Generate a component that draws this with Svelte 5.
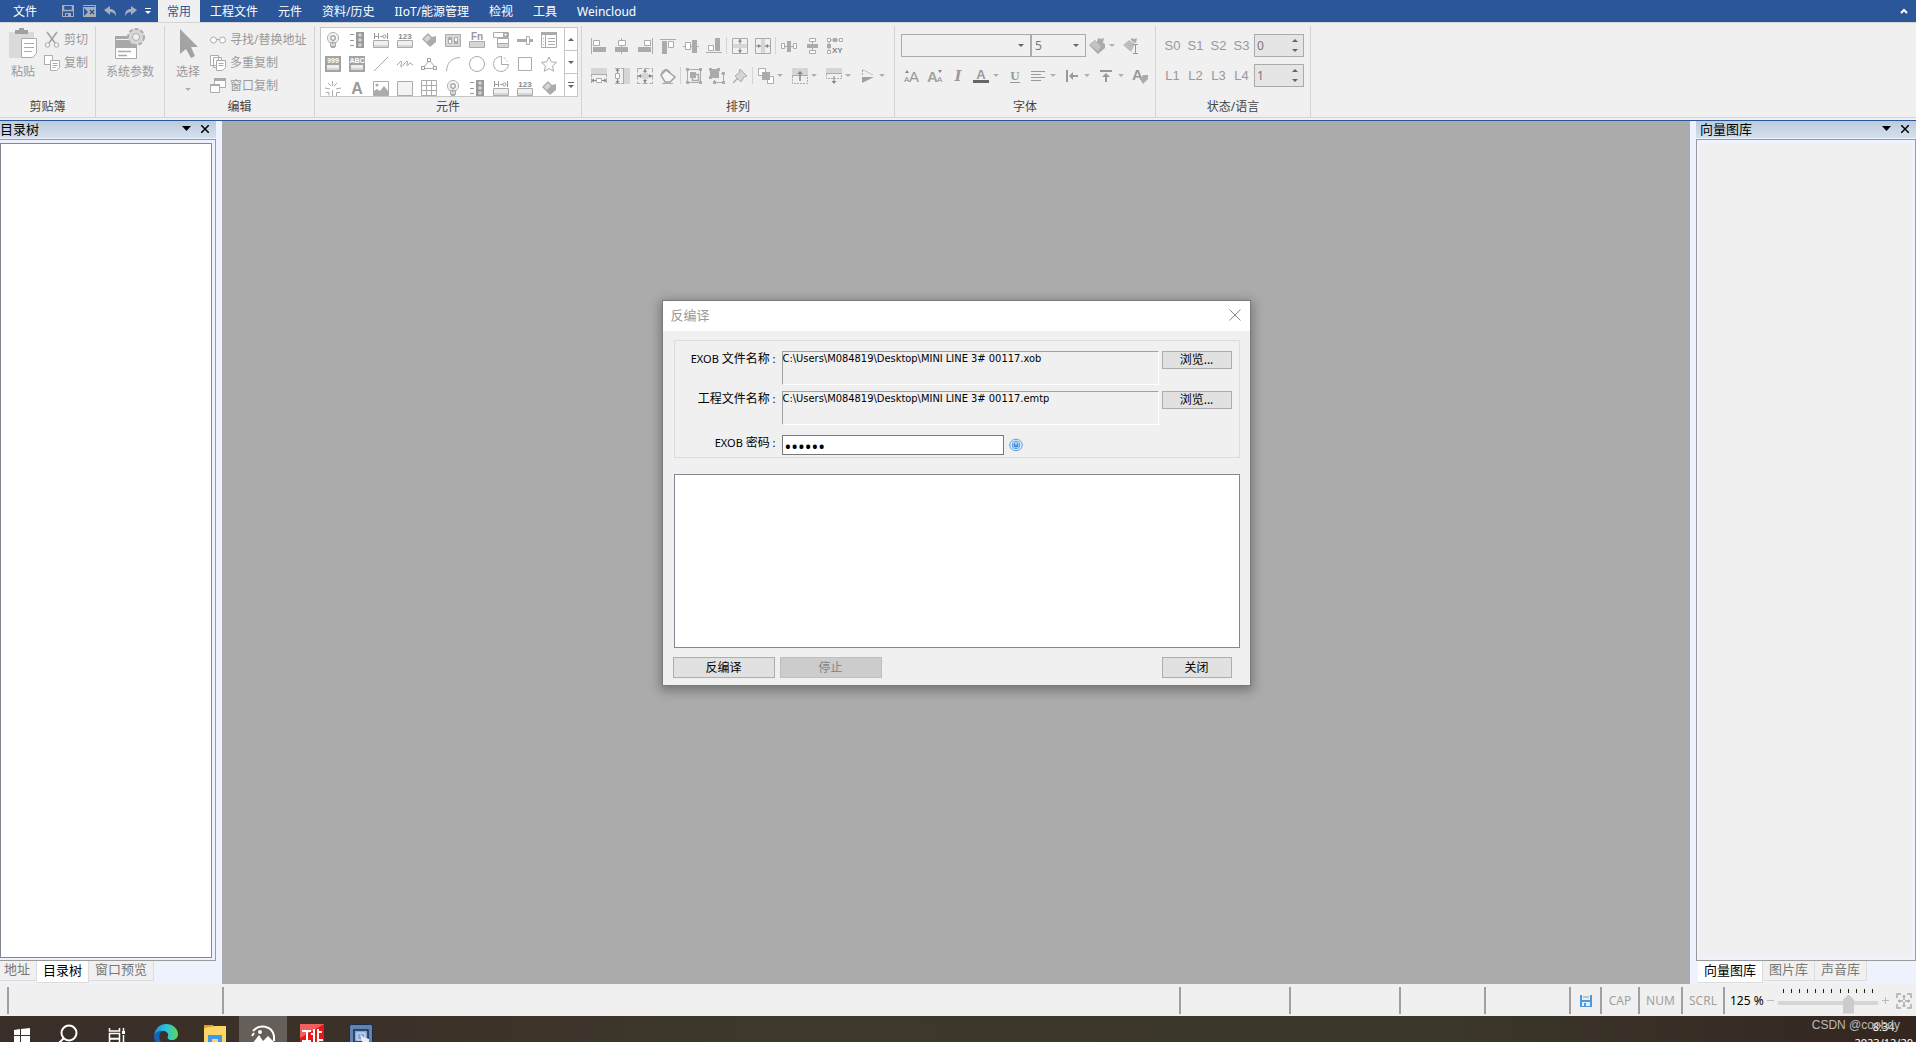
<script lang="ts">
  const G = '#ababab';
  const L = '#d6d6d6';

  // 16x16 icon bodies, drawn in the disabled greys of the ribbon
  const icons: Record<string, string> = {
    bulb: `<circle cx="8" cy="6" r="5.500" fill="#f6f6f6" stroke="${G}"/><circle cx="8" cy="6" r="2.300" fill="none" stroke="${G}" stroke-width="1.500"/><path d="M5.500 10.500h5v4h-5z" fill="${L}" stroke="${G}"/><path d="M8 8v4M6 15.500h4" stroke="${G}"/>`,
    traffic: `<path d="M1 2.500h4M1 8.500h4M1 13.500h4" stroke="#999"/><path d="M7 0h8v16H7z" fill="#999"/><circle cx="11" cy="3" r="1.800" fill="${L}"/><circle cx="11" cy="8" r="1.800" fill="${L}"/><circle cx="11" cy="13" r="1.800" fill="${L}"/>`,
    toggle: `<path d="M1.500 1v6M1.500 4.500h4M5.500 1v6M7 4.500h3M14.500 1v6" fill="none" stroke="#999"/><circle cx="11.500" cy="4.500" r="1.500" fill="none" stroke="#999"/><path d="M.5 8.500h15v7H.5z" fill="#f0f0f0" stroke="${G}"/><path d="M1 13h14v2H1z" fill="${L}"/>`,
    num: `<text x="8" y="7" text-anchor="middle" font-family="Liberation Sans" font-weight="bold" font-size="8" fill="#888">123</text><path d="M.5 8.500h15v7H.5z" fill="#f0f0f0" stroke="${G}"/><path d="M1 13h14v2H1z" fill="${L}"/>`,
    knob: `<path d="M1 7l6-6 4 4 4-1v6l-6 5z" fill="${G}"/><path d="M3 7l4-4 3 3-4 4z" fill="${L}"/>`,
    switches: `<path d="M.5 2.500h15v12H.5z" fill="${L}" stroke="${G}"/><path d="M3.500 5.500h3v6h-3zM9.500 5.500h3v6h-3z" fill="#fff" stroke="${G}"/><path d="M4 6h2v2H4zM10 9h2v2h-2z" fill="${G}"/>`,
    fn: `<text x="8" y="8" text-anchor="middle" font-family="Liberation Sans" font-weight="bold" font-size="10" fill="#999">Fn</text><path d="M.5 9.500h15v6H.5z" fill="${L}" stroke="${G}"/>`,
    combo: `<path d="M.5.5h15v5H.5zM4.500 6.500h11v9h-11zM4.500 11.500h11" fill="#fff" stroke="${G}"/><path d="M10 1h5v4h-5z" fill="${G}"/><path d="M11 2h3l-1.500 2z" fill="#fff"/><path d="M5 12h10v3H5z" fill="${L}"/>`,
    slider: `<path d="M0 7h9v3H0zM13 7h3v3h-3z" fill="${G}"/><path d="M9.500 4.500h3v8h-3z" fill="#fff" stroke="${G}"/>`,
    list: `<path d="M.5.5h15v15H.5z" fill="#fff" stroke="${G}"/><path d="M0 0h16v3H0z" fill="${G}"/><path d="M4.500 3v12M7 6.500h7M7 9.500h7M7 12.500h7M2 6.500h1M2 9.500h1M2 12.500h1" stroke="${G}"/>`,
    n999: `<path d="M0 0h16v16H0z" fill="#a3a3a3"/><text x="8" y="7" text-anchor="middle" font-family="Liberation Sans" font-weight="bold" font-size="7" fill="#fff">999</text><path d="M2 9h12v5H2z" fill="#eee"/><path d="M2 12h12v2H2z" fill="${L}"/>`,
    abc: `<path d="M0 0h16v16H0z" fill="#a3a3a3"/><text x="8" y="7" text-anchor="middle" font-family="Liberation Sans" font-weight="bold" font-size="7" fill="#fff">ABC</text><path d="M2 9h12v5H2z" fill="#eee"/><path d="M2 12h12v2H2z" fill="${L}"/>`,
    line: `<path d="M1 15L15 1" stroke="${G}"/>`,
    squiggle: `<path d="M0 9l3-3c2-2 2 0 1 3s1 2 3-1l2-2c2-2 2 0 1 2s1 2 2 0l1-1c1-1 1 2 3 2" fill="none" stroke="#a0a0a0"/>`,
    poly: `<path d="M3 11l4-5M9.500 5.500l4 5M3 12.500h9" stroke="${G}"/><path d="M6.500 2.500h3v3h-3zM.5 10.500h3v3h-3zM12.500 10.500h3v3h-3z" fill="#fff" stroke="#999"/>`,
    arc: `<path d="M1.500 15C2 7 6 2 15 1.500" fill="none" stroke="${G}"/>`,
    circle: `<circle cx="8" cy="8" r="7.500" fill="none" stroke="${G}"/>`,
    pie: `<path d="M8.500.5A7.500 7.500 0 1 0 15.500 8.500h-7z" fill="none" stroke="${G}"/><path d="M11 1.500l3.500 4" stroke="${G}" stroke-dasharray="2"/>`,
    rect: `<path d="M1.500 1.500h13v13h-13z" fill="none" stroke="${G}"/>`,
    star: `<path d="M8 1l2.200 4.800 5.300.6-4 3.500 1.200 5.300L8 12.500l-4.700 2.700 1.200-5.300-4-3.500 5.300-.6z" fill="none" stroke="${G}"/>`,
    burst: `<path d="M7.500 1v5M3 3l3 3M12 3l-3 3M0 8l5 1M16 8l-5 1M1 12.500h3v3M7.500 10v6M11.500 16v-3.500H15" fill="none" stroke="${G}"/>`,
    bigA: `<text x="8" y="14" text-anchor="middle" font-family="Liberation Sans" font-weight="bold" font-size="16" fill="#999">A</text>`,
    picture: `<path d="M.5 1.500h15v14H.5z" fill="#fff" stroke="${G}"/><circle cx="4" cy="5" r="1.500" fill="${G}"/><path d="M1 15v-4l3-2 3 2 4-5 4 5v4z" fill="${G}"/>`,
    frame: `<path d="M.5 1.500h15v14H.5z" fill="#f3f3f3" stroke="${G}"/>`,
    grid: `<path d="M.5.5h15v15H.5zM.5 5.500h15M.5 10.500h15M5.500.5v15M10.500.5v15" fill="none" stroke="${G}"/>`,

    alLeft: `<path d="M.5 0v16" stroke="${G}"/><path d="M2.500 2.500h6v5h-6z" fill="#fff" stroke="${G}"/><path d="M2 9h13v5H2z" fill="${G}"/>`,
    alCenter: `<path d="M7.500 0v16" stroke="${G}"/><path d="M4.500 2.500h7v5h-7z" fill="#fff" stroke="${G}"/><path d="M1 9h13v5H1z" fill="${G}"/>`,
    alRight: `<path d="M15.500 0v16" stroke="${G}"/><path d="M7.500 2.500h6v5h-6z" fill="#fff" stroke="${G}"/><path d="M1 9h13v5H1z" fill="${G}"/>`,
    alTop: `<path d="M0 1.500h16" stroke="${G}"/><path d="M2 3h5v13H2z" fill="${G}"/><path d="M8.500 3.500h5v6h-5z" fill="#fff" stroke="${G}"/>`,
    alMid: `<path d="M0 8.500h16" stroke="${G}"/><path d="M2.500 4.500h5v7h-5z" fill="#fff" stroke="${G}"/><path d="M9 2h5v13H9z" fill="${G}"/>`,
    alBottom: `<path d="M0 14.500h16" stroke="${G}"/><path d="M2.500 7.500h5v5h-5z" fill="#fff" stroke="${G}"/><path d="M9 0h5v13H9z" fill="${G}"/>`,
    midV: `<path d="M.5.5h15v15H.5z" fill="none" stroke="${G}"/><path d="M1 6h14v4H1z" fill="${L}"/><path d="M8 1v5M8 10v5" stroke="#888"/><path d="M6 4h4L8 1zM6 12h4l-2 3z" fill="#888"/>`,
    midH: `<path d="M.5.5h15v15H.5z" fill="none" stroke="${G}"/><path d="M6 1h4v14H6z" fill="${L}"/><path d="M1 8h5M10 8h5" stroke="#888"/><path d="M3 6v4l3-2zM13 6v4l-3-2z" fill="#888"/>`,
    spaceH: `<path d="M0 8.500h16" stroke="${G}"/><path d="M.5 5.500h3v5h-3zM12.500 5.500h3v5h-3z" fill="#fff" stroke="${G}"/><path d="M6 3h4v11H6z" fill="${G}"/>`,
    spaceV: `<path d="M8.500 0v16" stroke="${G}"/><path d="M5.500.5h6v3h-6zM5.500 12.500h6v3h-6z" fill="#fff" stroke="${G}"/><path d="M3 6h11v4H3z" fill="${G}"/>`,
    xy: `<path d="M2 2h12M2 2v12" stroke="${G}"/><path d="M.5.5h3v3h-3zM12.500.5h3v3h-3zM.5 12.500h3v3h-3z" fill="#fff" stroke="${G}"/><path d="M6 0h4v4H6zM0 6h4v4H0z" fill="${G}"/><text x="5" y="15" font-family="Liberation Sans" font-weight="bold" font-size="8" fill="#888">XY</text>`,
    sameW: `<path d="M0 0h16v6H0z" fill="${L}"/><path d="M0 6.500h16" stroke="${G}"/><path d="M.5 7v9M15.500 7v9" fill="none" stroke="${G}" stroke-dasharray="2 1"/><path d="M5.500 10.500h5v4h-5z" fill="#fff" stroke="${G}"/><path d="M1 12.500h4M11 12.500h4" stroke="#888"/><path d="M0 12.500l3-2v4zM16 12.500l-3-2v4z" fill="#888"/>`,
    sameH: `<path d="M10 0h6v16h-6z" fill="${L}"/><path d="M9.500 0v16" stroke="${G}"/><path d="M9 .5H0M9 15.500H0" stroke="${G}" stroke-dasharray="2 1"/><path d="M1.500 5.500h4v5h-4z" fill="#fff" stroke="${G}"/><path d="M3.500 1v4M3.500 11v4" stroke="#888"/><path d="M3.500 0l2 3h-4zM3.500 16l2-3h-4z" fill="#888"/>`,
    sameBoth: `<path d="M.5.5h15v15H.5z" fill="none" stroke="${G}" stroke-dasharray="5 2"/><path d="M5 5h6v6H5z" fill="${L}"/><path d="M8 1v14M1 8h14" stroke="#888" stroke-dasharray="4 6 4"/><path d="M6 4h4L8 1zM6 12h4l-2 3zM4 6v4L1 8zM12 6v4l3-2z" fill="#888"/>`,
    rotate: `<path d="M2 15.500h11" stroke="${G}"/><circle cx="6" cy="6" r="4.500" fill="${L}" stroke="${G}"/><path d="M1 7l5-5 9 7-5 5H5z" fill="#f6f6f6" stroke="#a0a0a0" stroke-width="1.500"/>`,
    group: `<path d="M1.500 1.500h13v13h-13z" fill="none" stroke="${G}"/><path d="M0 0h3v3H0zM13 0h3v3h-3zM0 13h3v3H0zM13 13h3v3h-3z" fill="${G}"/><path d="M4 4h6v6H4z" fill="${G}"/><path d="M10 6.500h2.500v6h-6V10" fill="none" stroke="${G}" stroke-width="1.500"/>`,
    ungroup: `<path d="M1 1h9v9H1z" fill="${G}"/><path d="M0 0h3v3H0zM8 0h3v3H8zM0 8h3v3H0z" fill="${G}"/><path d="M12 5.500h2.500v9h-9V12" fill="none" stroke="${G}"/><path d="M13 4h3v3h-3zM13 13h3v3h-3zM4 13h3v3H4z" fill="${G}"/>`,
    pin: `<path d="M1 15l5-5" stroke="${G}" stroke-width="1.500"/><path d="M8 1l7 7-3 1-3 5-6-6 4-3z" fill="${L}" stroke="${G}"/>`,
    layer: `<path d="M.5.5h7v7h-7z" fill="#fff" stroke="${G}"/><path d="M9.500 8.500h6v7h-6z" fill="#fff" stroke="${G}"/><path d="M4 4h8v8H4z" fill="${G}"/>`,
    up: `<path d="M0 0h16v7H0z" fill="${L}"/><path d="M0 7.500h16" stroke="${G}"/><path d="M.5 8v7.500h15V8" fill="none" stroke="${G}" stroke-dasharray="2 1"/><path d="M8 13V4" stroke="#888" stroke-width="1.500"/><path d="M5 6h6L8 3z" fill="#888"/>`,
    down: `<path d="M0 0h16v5H0z" fill="${L}"/><path d="M0 5.500h16" stroke="${G}"/><path d="M.5 6v4.500h15V6" fill="none" stroke="${G}" stroke-dasharray="2 1"/><path d="M8 8v6" stroke="#888"/><path d="M5.500 13h5L8 16z" fill="#888"/>`,
    flip: `<path d="M2.500 7V1.500L13 7" fill="none" stroke="${G}" stroke-dasharray="2 1"/><path d="M2 9h12L2 15z" fill="#a0a0a0"/>`,

    brush: `<path d="M0 7l6-5 2 2 1-4 3 1 3-1-1 5 2 1v4l-7 6z" fill="${G}"/><path d="M1 7l5-4 6 5-3 5z" fill="#c4c4c4"/>`,
    brushI: `<path d="M0 7l6-5 6 4-4 8z" fill="#bdbdbd"/><path d="M8 0l3 1 3-1-1 5-3-1-2-2z" fill="${G}"/><path d="M10 6.500h5M10 15.500h5M12.500 7v8" stroke="#999"/>`,
    grow: `<text x="5" y="14" font-family="Liberation Sans" font-size="15" fill="#999">A</text><text x="0" y="14" font-family="Liberation Sans" font-size="8" fill="#888">A</text><path d="M1 5h4L3 2z" fill="#888"/>`,
    shrink: `<text x="0" y="14" font-family="Liberation Sans" font-size="15" font-weight="bold" fill="#a3a3a3">A</text><text x="10" y="14" font-family="Liberation Sans" font-size="8" fill="#888">A</text><path d="M11 2h4l-2 3z" fill="#888"/>`,
    italic: `<text x="8" y="13" text-anchor="middle" font-family="DejaVu Serif" font-style="italic" font-weight="bold" font-size="14" fill="#999">I</text>`,
    color: `<text x="8" y="11" text-anchor="middle" font-family="Liberation Sans" font-weight="bold" font-size="13" fill="#999">A</text><path d="M0 12h16v3H0z" fill="#666"/>`,
    under: `<text x="8" y="12" text-anchor="middle" font-family="Liberation Serif" font-weight="bold" font-size="13" fill="#999">U</text><path d="M3 14.500h10" stroke="#999"/>`,
    lines: `<path d="M1 3.500h14M1 6.500h10M1 9.500h14M1 12.500h10" stroke="#999"/>`,
    indent: `<path d="M3 2v12" stroke="#999" stroke-width="2"/><path d="M6 8h8" stroke="#999" stroke-width="2"/><path d="M5 8l4-4v8z" fill="#999"/>`,
    toTop: `<path d="M2 3h12" stroke="#999" stroke-width="2"/><path d="M8 6v8" stroke="#999" stroke-width="2"/><path d="M4 9h8L8 5z" fill="#999"/>`,
    tag: `<text x="0" y="12" font-family="Liberation Sans" font-weight="bold" font-size="15" fill="#999">A</text><path d="M8 11l3-4h5v4l-5 5z" fill="${G}"/>`,

    cut: `<path d="M3 0l8 11M13 0L5 11" stroke="#a0a0a0" stroke-width="1.500"/><circle cx="3.500" cy="13" r="2.300" fill="none" stroke="${G}"/><circle cx="12.500" cy="13" r="2.300" fill="none" stroke="${G}"/>`,
    copy: `<path d="M.5.5h8v9h-8z" fill="#fff" stroke="${G}"/><path d="M6.500 5.500h9v7l-3 3h-6z" fill="#fff" stroke="${G}"/><path d="M8.500 8.500h5M8.500 10.500h5M8.500 12.500h3" stroke="${G}"/>`,
    find: `<circle cx="3.500" cy="8" r="3" fill="#fff" stroke="${G}"/><circle cx="12.500" cy="8" r="3" fill="#fff" stroke="${G}"/><path d="M6 7.500h4" stroke="${G}"/>`,
    multi: `<path d="M.5.5h8v10h-8zM3.500 2.500h8v10h-8z" fill="#fff" stroke="${G}"/><path d="M6.500 5.500h9v7l-3 3h-6z" fill="#fff" stroke="${G}"/><path d="M8.500 8.500h5M8.500 10.500h5" stroke="${G}"/>`,
    windows: `<path d="M4.500.5h11v9h-11z" fill="#fff" stroke="${G}"/><path d="M4 0h12v3H4z" fill="${G}"/><path d="M.5 6.500h9v8h-9z" fill="#fff" stroke="${G}"/><path d="M0 7h10" stroke="${G}" stroke-width="2"/>`,
    fit: `<path d="M1 5V1h4M11 1h4v4M15 11v4h-4M5 15H1v-4" fill="none" stroke="${G}" stroke-width="1.500"/><path d="M8 2v5M8 9v5M2 8h5M9 8h5" stroke="${G}" stroke-width="1.500"/><path d="M6 4h4L8 2zM6 12h4l-2 2zM4 6v4L2 8zM12 6v4l2-2z" fill="${G}"/>`,

    save: `<path d="M2.500 2.500h11v11h-11z" fill="none" stroke="#a9adb5"/><path d="M3 7.500h10M3.500 3v4M12.500 3v4" stroke="#a9adb5" stroke-width="1.500"/><path d="M5 10h6v4H5z" fill="#a9adb5"/><path d="M6 11h2v2H6z" fill="#2b579a"/>`,
    run: `<path d="M2 2h13v12H2z" fill="#a9adb5"/><path d="M2 3.500h12" stroke="#2b579a"/><path d="M3 5l4 4-4 4z" fill="#2b579a"/><path d="M9 7l4 4M13 7l-4 4" stroke="#2b579a" stroke-width="1.500"/>`,
    undo: `<path d="M2 7l6-4v3c4 0 6 2 6 7-2-3-3-4-6-4v3z" fill="#a9adb5"/>`,
    redo: `<path d="M14 7L8 3v3c-4 0-6 2-6 7 2-3 3-4 6-4v3z" fill="#a9adb5"/>`,
    disk: `<path d="M2 2h12v12H2z" fill="#4f98e0"/><path d="M4 2h8v5H4z" fill="#e8eef5"/><path d="M5 3h6v2H5z" fill="#c4c4c4"/><path d="M4 9h8v4H4z" fill="#e8eef5"/><path d="M6 10h2v3H6z" fill="#4f98e0"/>`
  };

  const tabs = ['工程文件', '元件', '资料/历史', 'IIoT/能源管理', '检视', '工具', 'Weincloud'];

  const gallery = [
    ['bulb', 'traffic', 'toggle', 'num', 'knob', 'switches', 'fn', 'combo', 'slider', 'list'],
    ['n999', 'abc', 'line', 'squiggle', 'poly', 'arc', 'circle', 'pie', 'rect', 'star'],
    ['burst', 'bigA', 'picture', 'frame', 'grid', 'bulb', 'traffic', 'toggle', 'num', 'knob']
  ].flat();

  // '|' is a divider, a trailing ':v' marks a drop-down
  const arrange = [
    ['alLeft', 'alCenter', 'alRight', 'alTop', 'alMid', 'alBottom', '|', 'midV', 'midH', '|', 'spaceH', 'spaceV', 'xy'],
    ['sameW', 'sameH', 'sameBoth', 'rotate', '|', 'group', 'ungroup', 'pin', '|', 'layer:v', 'up:v', 'down:v', 'flip:v']
  ];
  const fontRow = ['grow', 'shrink', 'italic', 'color:v', 'under', 'lines:v', 'indent:v', 'toTop:v', 'tag'];

  const ticks = Array.from({ length: 12 });

  let password = $state('117117');
  let showPassword = $state(false);
  let stateNo = $state('0');
  let langNo = $state('1');
  let zoom = $state(73);
</script>

{#snippet icon(name: string)}
  <svg class="icon" viewBox="0 0 16 16" aria-hidden="true">{@html icons[name]}</svg>
{/snippet}

{#snippet tools(items: string[])}
  {#each items as item}
    {#if item === '|'}
      <span class="divider"></span>
    {:else}
      <button class="tool" class:drop={item.endsWith(':v')} aria-label={item.split(':')[0]}>
        <span class="tool-icon">{@render icon(item.split(':')[0])}</span>
        {#if item.endsWith(':v')}<span class="caret light"></span>{/if}
      </button>
    {/if}
  {/each}
{/snippet}

{#snippet paneHeader(title: string)}
  <header class="pane-header">
    <h2>{title}</h2>
    <button aria-label="menu"><svg width="9" height="5" viewBox="0 0 9 5"><path d="M0 0h9L4.500 5z" /></svg></button>
    <button aria-label="close"><svg width="8" height="8" viewBox="0 0 8 8"><path d="M0 0l8 8M8 0L0 8" stroke="#000" stroke-width="1.500" /></svg></button>
  </header>
{/snippet}

<div class="app">
  <nav class="menubar">
    <button class="file-tab">文件</button>
    <div class="quick">
      <button aria-label="save">{@render icon('save')}</button>
      <button aria-label="run">{@render icon('run')}</button>
      <button aria-label="undo">{@render icon('undo')}</button>
      <button aria-label="redo">{@render icon('redo')}</button>
      <button aria-label="customize" class="more">
        <svg width="6" height="7" viewBox="0 0 6 7"><path d="M0 .5h6" stroke="#fff" /><path d="M0 3h6L3 6z" fill="#fff" /></svg>
      </button>
    </div>
    <button class="tab active">常用</button>
    {#each tabs as tab}
      <button class="tab">{tab}</button>
    {/each}
    <button class="collapse" aria-label="collapse">
      <svg width="8" height="6" viewBox="0 0 8 6"><path d="M1 5l3-3 3 3" fill="none" stroke="#fff" stroke-width="2" /></svg>
    </button>
  </nav>

  <div class="ribbon">
    <section class="group clipboard">
      <div class="group-body">
        <button class="big">
          <svg width="30" height="32" viewBox="0 0 30 32">
            <path d="M1 4h25v26H1z" fill="#dadada" /><path d="M7 2h4V0h5v2h4v4H7z" fill="#a0a0a0" />
            <path d="M13.500 10.500h15v15l-4 4h-11z" fill="#fff" stroke="#ababab" />
            <path d="M16 15.500h10M16 19.500h10M16 23.500h8" stroke="#ababab" />
          </svg>
          粘贴
        </button>
        <div class="stack">
          <button class="small">{@render icon('cut')}剪切</button>
          <button class="small">{@render icon('copy')}复制</button>
        </div>
      </div>
      <h3>剪贴簿</h3>
    </section>

    <section class="group system">
      <div class="group-body">
        <button class="big">
          <svg width="32" height="32" viewBox="0 0 32 32">
            <path d="M1.500 9.500h21v21h-21z" fill="#fff" stroke="#a8a8a8" /><path d="M1 8h22v12H1z" fill="#a8a8a8" />
            <path d="M2 11.500h20" stroke="#f0f0f0" />
            <path d="M4 23.500h13M4 27.500h9" stroke="#a8a8a8" stroke-width="1.500" />
            <circle cx="22" cy="9" r="8" fill="#d6d6d6" stroke="#ababab" stroke-width="2" stroke-dasharray="4 2" />
            <circle cx="22" cy="9" r="7" fill="#d6d6d6" /><circle cx="22" cy="9" r="3.500" fill="#f0f0f0" stroke="#ababab" />
          </svg>
          系统参数
        </button>
      </div>
    </section>

    <section class="group edit">
      <div class="group-body">
        <button class="big">
          <svg width="24" height="32" viewBox="0 0 24 32"><path d="M4 1v25l6-5 5 9 4-2-4-9h7z" fill="#a3a3a3" /></svg>
          选择
          <span class="caret light"></span>
        </button>
        <div class="stack">
          <button class="small">{@render icon('find')}寻找/替换地址</button>
          <button class="small">{@render icon('multi')}多重复制</button>
          <button class="small">{@render icon('windows')}窗口复制</button>
        </div>
      </div>
      <h3>编辑</h3>
    </section>

    <section class="group objects">
      <div class="gallery">
        <div class="cells">
          {#each gallery as name}
            <button aria-label={name}>{@render icon(name)}</button>
          {/each}
        </div>
        <div class="gallery-scroll">
          <button aria-label="up"><span class="caret flip"></span></button>
          <button aria-label="down"><span class="caret"></span></button>
          <button aria-label="more">
            <svg width="6" height="7" viewBox="0 0 6 7"><path d="M0 .5h6" stroke="#666" /><path d="M0 3h6L3 6z" fill="#666" /></svg>
          </button>
        </div>
      </div>
      <h3>元件</h3>
    </section>

    <section class="group arrange">
      <div class="rows">
        {#each arrange as row}
          <div class="row">{@render tools(row)}</div>
        {/each}
      </div>
      <h3>排列</h3>
    </section>

    <section class="group fonts">
      <div class="rows">
        <div class="row">
          <span class="picker family"><select aria-label="font"><option></option></select><span class="caret"></span></span>
          <span class="picker size"><select aria-label="font size"><option>5</option></select><span class="caret"></span></span>
          {@render tools(['brush:v', 'brushI'])}
        </div>
        <div class="row">{@render tools(fontRow)}</div>
      </div>
      <h3>字体</h3>
    </section>

    <section class="group states">
      <div class="rows">
        <div class="row">
          {#each ['S0', 'S1', 'S2', 'S3'] as s}<button class="tool">{s}</button>{/each}
          <span class="spin">
            <input aria-label="state" bind:value={stateNo} />
            <span class="spin-buttons"><span class="caret flip"></span><span class="caret"></span></span>
          </span>
        </div>
        <div class="row">
          {#each ['L1', 'L2', 'L3', 'L4'] as l}<button class="tool">{l}</button>{/each}
          <span class="spin">
            <input aria-label="language" bind:value={langNo} />
            <span class="spin-buttons"><span class="caret flip"></span><span class="caret"></span></span>
          </span>
        </div>
      </div>
      <h3>状态/语言</h3>
    </section>
  </div>

  <main>
    <aside class="pane left">
      {@render paneHeader('目录树')}
      <div class="pane-box"><div class="tree"></div></div>
      <div class="pane-tabs">
        <button>地址</button>
        <button class="active">目录树</button>
        <button>窗口预览</button>
      </div>
    </aside>

    <div class="workspace">
      <div class="dialog" role="dialog" aria-label="反编译">
        <header>
          <h1>反编译</h1>
          <button aria-label="关闭"><svg width="12" height="12" viewBox="0 0 12 12"><path d="M.5.5l11 11M11.500.5l-11 11" stroke="#888" /></svg></button>
        </header>
        <div class="dialog-body">
          <div class="fields">
            <span class="label">EXOB <b>文件名称</b> :</span>
            <div class="path">C:\Users\M084819\Desktop\MINI LINE 3# 00117.xob</div>
            <button class="btn">浏览...</button>

            <span class="label"><b>工程文件名称</b> :</span>
            <div class="path">C:\Users\M084819\Desktop\MINI LINE 3# 00117.emtp</div>
            <button class="btn">浏览...</button>

            <label class="label" for="pwd">EXOB <b>密码</b> :</label>
            <div class="secret">
              <input id="pwd" type={showPassword ? 'text' : 'password'} bind:value={password} />
              <button aria-label="show password" onclick={() => (showPassword = !showPassword)}>
                <svg width="14" height="14" viewBox="0 0 14 14">
                  <ellipse cx="7" cy="7" rx="6.300" ry="5.800" fill="#dcebfa" stroke="#5fa2e6" />
                  <circle cx="7" cy="7" r="3.800" fill="#eef6ff" stroke="#4f98e0" />
                  <circle cx="7" cy="7" r="2.600" fill="#3d8de0" /><path d="M7 5v2" stroke="#fff" />
                </svg>
              </button>
            </div>
          </div>
          <textarea aria-label="log" readonly></textarea>
          <div class="actions">
            <button class="btn wide">反编译</button>
            <button class="btn wide" disabled>停止</button>
            <button class="btn end">关闭</button>
          </div>
        </div>
      </div>
    </div>

    <aside class="pane right">
      {@render paneHeader('向量图库')}
      <div class="pane-box"></div>
      <div class="pane-tabs">
        <button class="active">向量图库</button>
        <button>图片库</button>
        <button>声音库</button>
      </div>
    </aside>
  </main>

  <footer class="statusbar">
    <span class="cell first"></span>
    <span class="cell grow"></span>
    <span class="cell c110"></span>
    <span class="cell c110"></span>
    <span class="cell c86"></span>
    <span class="cell c86"></span>
    <span class="cell c31">{@render icon('disk')}</span>
    <span class="cell c38">CAP</span>
    <span class="cell c43">NUM</span>
    <span class="cell c42">SCRL</span>
    <div class="cell zoom">
      <span class="percent">125 %</span>
      <button aria-label="zoom out"><svg width="7" height="7" viewBox="0 0 7 7"><path d="M0 3.500h7" stroke="#bbb" /></svg></button>
      <div class="zoom-slider">
        <div class="ticks">{#each ticks as _}<i></i>{/each}</div>
        <input type="range" aria-label="zoom" min="0" max="100" bind:value={zoom} />
      </div>
      <button aria-label="zoom in"><svg width="7" height="7" viewBox="0 0 7 7"><path d="M0 3.500h7M3.500 0v7" stroke="#bbb" /></svg></button>
      <button aria-label="fit" class="fit">{@render icon('fit')}</button>
    </div>
  </footer>

  <div class="taskbar">
    <button class="start" aria-label="start">
      <svg width="18" height="18" viewBox="0 0 18 18"><path d="M1 6l6-1v6H1zM8 5l9-1v7H8zM1 12h6v6H1zM8 12h9v6H8z" fill="#fff" /></svg>
    </button>
    <button aria-label="search">
      <svg width="20" height="20" viewBox="0 0 20 20"><circle cx="11" cy="9" r="7.500" fill="none" stroke="#fff" stroke-width="2" /><path d="M6 14l-5 5" stroke="#fff" stroke-width="2" /></svg>
    </button>
    <button class="view" aria-label="task view">
      <svg width="18" height="18" viewBox="0 0 18 18"><path d="M1.500 4v3h10V4M1.500 18v-3h10v3M1.500 9.500h10v5h-10zM15.500 4v3M15.500 11v7" fill="none" stroke="#fff" stroke-width="1.500" /><path d="M14 7h3v3h-3z" fill="#fff" /></svg>
    </button>
    <button aria-label="browser">
      <svg width="24" height="24" viewBox="0 0 24 24">
        <defs><linearGradient id="edge" x1="0" x2="1"><stop offset="0" stop-color="#1b8fe0" /><stop offset=".5" stop-color="#28c4dc" /><stop offset="1" stop-color="#5fd65a" /></linearGradient></defs>
        <path d="M0 12C1 4 6 0 12 0c7 0 12 5 12 10 0 4-3 6-6 6-4 0-5-2-4-4 1-3-2-5-5-5-4 0-8 2-9 5z" fill="url(#edge)" />
        <path d="M0 12c1-3 4-5 8-5-3 2-4 8 0 12 3 4 9 4 13 2-3 3-6 3-9 3C5 24 0 18 0 12z" fill="#1663b5" />
      </svg>
    </button>
    <button class="files" aria-label="files">
      <svg width="24" height="22" viewBox="0 0 24 22"><path d="M1 1h9l2 3H1z" fill="#e0a010" /><path d="M1 4l11-2h11v20H1z" fill="#fcd467" /><path d="M5 11h14v11H5z" fill="#3f9ae8" /><path d="M9 15h6v7H9z" fill="#fcd467" /></svg>
    </button>
    <button class="current" aria-label="photos">
      <svg width="24" height="24" viewBox="0 0 24 24"><path d="M2 7c6-7 19-6 21 5v5" fill="none" stroke="#fff" stroke-width="2" /><path d="M1 20l7-9 4 6 5-5 6 6v6H1z" fill="#fff" /><circle cx="9" cy="8" r="2" fill="#fff" /><path d="M1 12l2-3" stroke="#fff" stroke-width="2" /></svg>
    </button>
    <button aria-label="plc">
      <svg width="24" height="24" viewBox="0 0 24 24"><path d="M0 0h24v24H0z" fill="#e81818" /><path d="M0 0h24L0 14z" fill="#f06060" /><path d="M2 7h9M7 7v10M2 17h9M14 5v19M18 5v19M11 10h3M18 8h4M18 16h5" fill="none" stroke="#fff" stroke-width="2" /></svg>
    </button>
    <button aria-label="hmi">
      <svg width="24" height="24" viewBox="0 0 24 24"><rect x=".5" y=".5" width="23" height="23" rx="2" fill="#5f84b8" stroke="#1b2c48" /><path d="M5 6h14v12H5z" fill="#86a5d0" stroke="#1b2c48" stroke-width="1.500" /><path d="M8 9h8v7H8z" fill="none" stroke="#dfe9f6" /><path d="M11 10l3 3 6 2v9h-5z" fill="#e8eef6" /></svg>
    </button>
    <div class="clock"><span>8:34</span><span>2023/12/20</span></div>
    <span class="watermark">CSDN @coobdy</span>
  </div>
</div>

<style>
  :global(body) {
    margin: 0;
    background: #f0f0f0;
  }

  .app {
    display: flex;
    flex-direction: column;
    height: 100vh;
    overflow: hidden;
    font-family: 'Noto Sans', 'Noto Sans CJK SC', sans-serif;
    font-size: 12px;
    line-height: 16px;
    color: #000;
  }

  .app * {
    box-sizing: border-box;
  }

  button {
    display: flex;
    align-items: center;
    justify-content: center;
    padding: 0;
    border: 0;
    background: none;
    color: inherit;
    font: inherit;
    white-space: nowrap;
  }

  svg {
    display: block;
    flex-shrink: 0;
  }

  .icon {
    width: 16px;
    height: 16px;
    overflow: visible;
  }

  h1,
  h2,
  h3 {
    margin: 0;
    font-size: 13px;
    font-weight: 400;
  }

  /* menu bar */
  .menubar {
    display: flex;
    flex-shrink: 0;
    height: 22px;
    background: #2b579a;
    color: #fff;
  }

  .file-tab {
    width: 50px;
    padding-top: 2px;
  }

  .quick {
    display: flex;
    gap: 5px;
    width: 108px;
    padding-left: 10px;
  }

  .more {
    width: 8px;
  }

  .tab {
    padding: 2px 10px 0;
  }

  .tab.active {
    padding: 2px 9px 0;
    background: #f0f0f0;
    color: #2b579a;
  }

  .collapse {
    margin-left: auto;
    width: 24px;
  }

  /* ribbon */
  .ribbon {
    display: flex;
    flex-shrink: 0;
    height: 99px;
    padding-top: 3px;
    border-top: 1px solid #d4d4d4;
    border-bottom: 1px solid #2b579a;
    background: linear-gradient(#d4d4d4, #d4d4d4) 0 94px / 100% 1px no-repeat #f0f0f0;
    color: #999;
  }

  .group {
    display: flex;
    flex-direction: column;
    justify-content: space-between;
    height: 91px;
    padding-bottom: 2px;
    border-right: 1px solid #d4d4d4;
  }

  .group h3 {
    color: #444;
    font-size: 12px;
    text-align: center;
  }

  .group-body {
    display: flex;
    padding-top: 2px;
  }

  .clipboard {
    width: 96px;
  }

  .clipboard .group-body {
    padding-left: 8px;
    gap: 6px;
  }

  .system {
    width: 69px;
  }

  .system .group-body {
    justify-content: center;
  }

  .edit {
    width: 150px;
  }

  .edit .group-body {
    padding-left: 11px;
    gap: 10px;
  }

  .objects {
    width: 267px;
  }

  .arrange {
    width: 313px;
  }

  .fonts {
    width: 261px;
  }

  .states {
    width: 155px;
  }

  .big {
    display: flex;
    flex-direction: column;
    align-items: center;
    justify-content: flex-start;
    gap: 4px;
  }

  .big .caret {
    margin-top: 4px;
  }

  .stack {
    display: flex;
    flex-direction: column;
  }

  .small {
    justify-content: flex-start;
    gap: 4px;
    height: 23px;
  }

  .caret {
    flex-shrink: 0;
    width: 0;
    height: 0;
    border: 3px solid transparent;
    border-top-color: #666;
    border-bottom: 0;
  }

  .caret.light {
    border-top-color: #b0b0b0;
  }

  .caret.flip {
    border-top: 0;
    border-bottom: 3px solid #666;
  }

  .gallery {
    display: flex;
    height: 70px;
    margin: 1px 3px 0 5px;
    border: 1px solid #c6c6c6;
    background: #fff;
    overflow: hidden;
  }

  .cells {
    display: grid;
    grid-template-columns: repeat(10, 24px);
    grid-template-rows: repeat(3, 24px);
    width: 243px;
  }

  .gallery-scroll {
    display: flex;
    flex: 1;
    flex-direction: column;
    border-left: 1px solid #c6c6c6;
  }

  .gallery-scroll button {
    flex: 1;
  }

  .gallery-scroll button + button {
    border-top: 1px solid #c6c6c6;
  }

  .rows {
    display: flex;
    flex-direction: column;
    gap: 7px;
    padding: 8px 0 0 6px;
  }

  .arrange .rows,
  .states .rows {
    padding-left: 5px;
  }

  .row {
    display: flex;
    height: 23px;
  }

  .tool {
    width: 23px;
    font-family: 'Liberation Sans', sans-serif;
    font-size: 13px;
  }

  .tool.drop {
    width: 34px;
    justify-content: flex-start;
  }

  .tool-icon {
    display: flex;
    justify-content: flex-start;
    width: 23px;
    padding-left: 4px;
  }

  .fonts .tool-icon {
    padding-left: 3px;
  }

  .divider {
    width: 1px;
    height: 17px;
    margin: 3px 1px;
    background: #d4d4d4;
  }

  .picker {
    display: flex;
    align-items: center;
    border: 1px solid #ababab;
  }

  .picker select {
    flex: 1;
    align-self: stretch;
    padding: 0 3px;
    border: 0;
    appearance: none;
    background: none;
    color: #777;
    font: inherit;
  }

  .picker .caret {
    margin-right: 6px;
  }

  .family {
    width: 130px;
  }

  .size {
    width: 55px;
  }

  .spin {
    display: flex;
    width: 50px;
    margin-left: 1px;
    border: 1px solid #ababab;
    background: #e5e5e5;
  }

  .spin input {
    width: 37px;
    padding: 0 2px;
    border: 0;
    background: none;
    color: #777;
    font: inherit;
  }

  .spin-buttons {
    display: flex;
    flex-direction: column;
    justify-content: center;
    gap: 7px;
  }

  /* side panes and workspace */
  main {
    display: flex;
    flex: 1;
    min-height: 0;
  }

  .pane {
    display: flex;
    flex-direction: column;
    flex-shrink: 0;
    background: #eef2fd;
    font-size: 13px;
  }

  .left {
    width: 222px;
    padding-right: 6px;
  }

  .right {
    width: 226px;
    padding-left: 6px;
  }

  .pane-header {
    display: flex;
    align-items: center;
    gap: 10px;
    height: 17px;
    padding: 0 7px 2px 0;
    background: linear-gradient(#bccbdc, #d3e0ee);
  }

  .pane-header h2 {
    margin-right: auto;
  }

  .right .pane-header h2 {
    padding-left: 4px;
  }

  .pane-box {
    display: flex;
    flex: 1;
    margin-top: 1px;
    padding: 3px 3px 2px 0;
    border: 1px solid #9a9a9a;
    border-left: 0;
  }

  .right .pane-box {
    border-left: 1px solid #9a9a9a;
    background: #f0f0f0;
    box-shadow: inset 0 0 0 3px #eef2fd;
  }

  .tree {
    flex: 1;
    border: 1px solid #828790;
    background: #fff;
  }

  .pane-tabs {
    display: flex;
    align-items: flex-start;
    height: 23px;
  }

  .right .pane-tabs {
    padding-left: 2px;
  }

  .pane-tabs button {
    height: 20px;
    padding: 0 6px 3px;
    border: 1px solid #dcdcdc;
    border-width: 0 1px 1px 0;
    background: #f0f0f0;
    color: #777;
  }

  .left .pane-tabs button:first-child {
    padding-left: 4px;
  }

  .pane-tabs button.active {
    height: 22px;
    background: #fff;
    color: #000;
  }

  .workspace {
    display: flex;
    flex: 1;
    align-items: flex-start;
    justify-content: center;
    padding-top: 179px;
    background: #ababab;
  }

  /* decompile dialog */
  .dialog {
    width: 589px;
    border: 1px solid #7a7a7a;
    background: #f0f0f0;
    box-shadow: 0 3px 10px 2px rgba(0, 0, 0, 0.3);
  }

  .dialog header {
    display: flex;
    align-items: center;
    justify-content: space-between;
    height: 30px;
    padding: 0 9px 3px 8px;
    background: #fff;
    color: #999;
  }

  .dialog-body {
    padding: 9px 10px 7px 11px;
  }

  .fields {
    display: grid;
    grid-template-columns: 101px 377px 70px;
    grid-template-rows: 34px 34px 24px;
    gap: 6px 3px;
    padding: 10px 0 2px 3px;
    border: 1px solid #dcdcdc;
  }

  .fields > :nth-child(n + 7) {
    margin-top: 4px;
  }

  .label {
    padding-right: 3px;
    font-size: 11px;
    text-align: right;
    white-space: nowrap;
  }

  .label b {
    font-size: 12px;
    font-weight: 400;
  }

  .path {
    border: 1px solid #a0a0a0;
    border-color: #a0a0a0 #fff #fff #a0a0a0;
    font-family: 'DejaVu Sans Condensed', 'DejaVu Sans', sans-serif;
    font-size: 11px;
    line-height: 14px;
  }

  .btn {
    width: 70px;
    height: 18px;
    border: 1px solid #adadad;
    background: #e1e1e1;
  }

  .secret {
    display: flex;
    align-items: center;
    gap: 5px;
    height: 20px;
  }

  .secret input {
    width: 222px;
    height: 20px;
    padding: 2px 2px 0;
    border: 1px solid #7a7a7a;
    background: #fff;
    font-family: inherit;
    font-size: 18px;
  }

  textarea {
    display: block;
    width: 100%;
    height: 174px;
    margin-top: 16px;
    padding: 2px;
    border: 1px solid #828790;
    background: #fff;
    resize: none;
  }

  .actions {
    display: flex;
    gap: 5px;
    margin-left: -1px;
    padding: 9px 8px 0 0;
  }

  .actions .btn {
    height: 21px;
  }

  .actions .wide {
    width: 102px;
  }

  .actions .btn:disabled {
    border-color: #bfbfbf;
    background: #ccc;
    color: #838383;
  }

  .actions .end {
    margin-left: auto;
  }

  /* status bar */
  .statusbar {
    display: flex;
    flex-shrink: 0;
    height: 32px;
    padding: 3px 0 2px 7px;
    background: #f0f0f0;
    color: #a0a0a0;
  }

  .cell {
    display: flex;
    align-items: center;
    justify-content: center;
    border-left: 2px solid #a0a0a0;
  }

  .first {
    width: 215px;
  }

  .grow {
    flex: 1;
  }

  .c110 {
    width: 110px;
  }

  .c86 {
    width: 85px;
  }

  .c31 {
    width: 31px;
  }

  .c38 {
    width: 38px;
  }

  .c43 {
    width: 43px;
  }

  .c42 {
    width: 42px;
  }

  .zoom {
    justify-content: flex-start;
    gap: 4px;
    width: 193px;
    padding-left: 5px;
  }

  .percent {
    width: 33px;
    color: #000;
    white-space: nowrap;
  }

  .zoom-slider {
    display: flex;
    flex-direction: column;
    width: 100px;
    padding-top: 2px;
  }

  .fit {
    margin-left: auto;
    padding-right: 4px;
  }

  .ticks {
    display: flex;
    justify-content: space-between;
    height: 5px;
    padding: 0 5px;
  }

  .ticks i {
    width: 1px;
    height: 4px;
    background: #0b2e0b;
  }

  input[type='range'] {
    width: 100%;
    height: 20px;
    margin: 0;
    appearance: none;
    background: linear-gradient(#d6d6d6, #d6d6d6) 0 7px / 100% 4px no-repeat;
  }

  input[type='range']::-webkit-slider-thumb {
    appearance: none;
    width: 11px;
    height: 19px;
    background: #ccc;
    clip-path: polygon(50% 0, 100% 28%, 100% 100%, 0 100%, 0 28%);
  }

  /* windows taskbar, cut off by the window edge */
  .taskbar {
    display: flex;
    align-items: flex-start;
    position: relative;
    flex-shrink: 0;
    height: 26px;
    overflow: hidden;
    background: linear-gradient(90deg, #3a2f28, #3b3128 20%, #3e382c 40%, #3c372b 75%, #33261f);
    color: #fff;
  }

  .taskbar button {
    align-items: flex-start;
    width: 49px;
    height: 40px;
    padding-top: 8px;
  }

  .taskbar .start {
    width: 42px;
    padding-left: 2px;
  }

  .taskbar .start + button {
    width: 51px;
  }

  .taskbar .view {
    width: 48px;
  }

  .taskbar .current {
    width: 48px;
    background: #665f59;
  }

  .clock {
    display: flex;
    flex-direction: column;
    align-items: center;
    margin-left: auto;
    padding: 3px 3px 0 0;
    font-size: 11px;
    line-height: 16px;
  }

  .watermark {
    position: absolute;
    top: 1px;
    right: 16px;
    color: #bbb;
    font-family: 'Liberation Sans', sans-serif;
    font-size: 12px;
  }
</style>
